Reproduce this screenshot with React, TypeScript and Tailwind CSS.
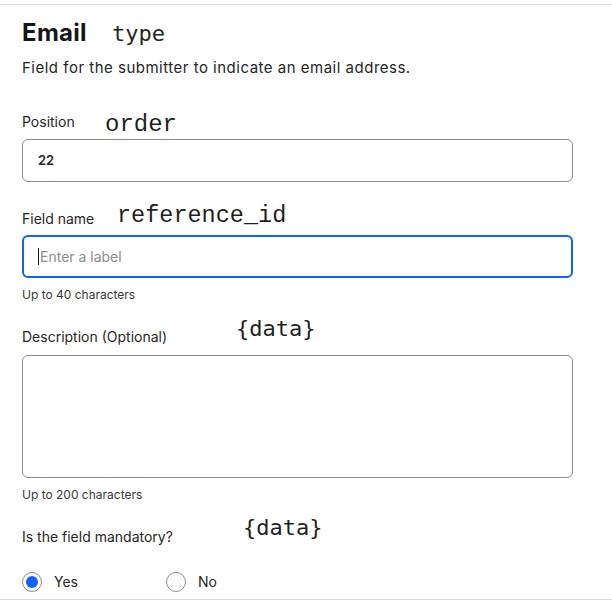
import React from "react";

const sans = { fontFamily: "Inter, 'Noto Sans', sans-serif" };

function Radio({ checked, label }: { checked?: boolean; label: string }) {
  return (
    <div className="flex w-[144px] items-center">
      <span className="flex h-[20px] w-[20px] items-center justify-center rounded-full border border-[#8d8d8d] bg-white">
        {checked && <span className="h-[12px] w-[12px] rounded-full bg-[#0f62fe]" />}
      </span>
      <span className="ml-[12px] text-[14px] text-[#262626]">{label}</span>
    </div>
  );
}

export default function App() {
  return (
    <div className="h-[601px] w-[612px] bg-white pt-[4px]" style={sans}>
      <div className="flex h-[596px] flex-col border-y border-[#e0e0e0] pl-[22px]">
        {/* header */}
        <div className="mt-[10px] flex h-[28px] items-baseline">
          <h1 className="w-[90px] text-[24px] font-bold tracking-[0.3px] text-[#161616]">Email</h1>
          <span className="font-['DejaVu_Sans_Mono',monospace] text-[22px] text-[#262626]">type</span>
        </div>
        <p className="mt-[15px] h-[20px] text-[15px] leading-[20px] tracking-[0.5px] text-[#262626]">
          Field for the submitter to indicate an email address.
        </p>

        {/* position */}
        <div className="mt-[25px] flex h-[24px] items-baseline">
          <span className="w-[83px] text-[14px] text-[#262626]">Position</span>
          <span className="translate-y-[4px] font-['Liberation_Mono',monospace] text-[24px] text-[#1f1f1f]">order</span>
        </div>
        <div className="mt-[12px] flex h-[43px] w-[551px] items-center rounded-[6px] border border-[#8d8d8d] pl-[15px]">
          <span className="text-[13px] font-semibold text-[#262626]">22</span>
        </div>

        {/* field name */}
        <div className="mt-[18px] flex h-[24px] items-baseline">
          <span className="w-[95px] text-[14px] text-[#262626]">Field name</span>
          <span className="-translate-y-[2px] font-['Liberation_Mono',monospace] text-[23.5px] text-[#1f1f1f]">reference_id</span>
        </div>
        <div className="mt-[11px] flex h-[43px] w-[551px] items-center rounded-[6px] border-2 border-[#0f62fe] pl-[14px]">
          <span className="h-[17px] w-px bg-[#161616]" />
          <span className="ml-[1px] text-[14px] text-[#8d8d8d]">Enter a label</span>
        </div>
        <p className="mt-[9px] h-[16px] text-[12px] leading-[16px] text-[#393939]">Up to 40 characters</p>

        {/* description */}
        <div className="mt-[15px] flex h-[24px] items-baseline">
          <span className="w-[214px] text-[14px] text-[#262626]">Description (Optional)</span>
          <span className="-translate-y-[6px] font-['DejaVu_Sans_Mono',monospace] text-[22px] text-[#1f1f1f]">{"{data}"}</span>
        </div>
        <div className="mt-[13px] h-[123px] w-[551px] rounded-[6px] border border-[#8d8d8d]" />
        <p className="mt-[9px] h-[16px] text-[12px] leading-[16px] text-[#393939]">Up to 200 characters</p>

        {/* mandatory */}
        <div className="mt-[15px] flex h-[24px] items-baseline">
          <span className="w-[221px] text-[14px] text-[#262626]">Is the field mandatory?</span>
          <span className="-translate-y-[7px] font-['DejaVu_Sans_Mono',monospace] text-[22px] text-[#1f1f1f]">{"{data}"}</span>
        </div>
        <div className="mt-[29px] flex">
          <Radio checked label="Yes" />
          <Radio label="No" />
        </div>
      </div>
    </div>
  );
}
